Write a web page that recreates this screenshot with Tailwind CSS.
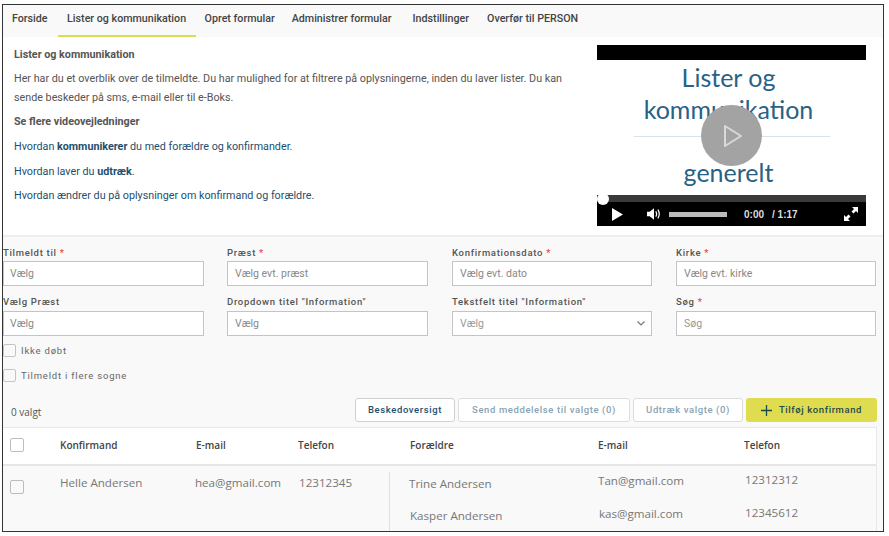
<!DOCTYPE html>
<html lang="da">
<head>
  <meta charset="UTF-8" />
  <title>Lister og kommunikation</title>
  <script src="https://cdn.jsdelivr.net/npm/@tailwindcss/browser@4"></script>
</head>
<body class="bg-white w-[889px] h-[536px] overflow-hidden font-['Roboto',sans-serif]">

  <div class="ml-[2px] mt-[4px] w-[882px] h-[528px] border border-[#333] bg-[#f9f9f9] overflow-hidden flex flex-col">

    <!-- Tabs -->
    <nav class="h-[32px] shrink-0 flex text-[10.7px] font-medium text-[#444] whitespace-nowrap">
      <a class="ml-[9px] pt-[6px]">Forside</a>
      <a class="ml-[10px] w-[138px] h-[32px] pt-[6px] text-center border-b-2 border-[#dcdc50]">Lister og kommunikation</a>
      <a class="ml-[9px] pt-[6px]">Opret formular</a>
      <a class="ml-[17px] pt-[6px]">Administrer formular</a>
      <a class="ml-[21px] pt-[6px]">Indstillinger</a>
      <a class="ml-[18px] pt-[6px]">Overfør til PERSON</a>
    </nav>

    <!-- Intro + video -->
    <section class="h-[200px] shrink-0 bg-white border-b-2 border-[#eeeeee] flex justify-between pl-[11px] pr-[17px]">
      <div class="w-[560px] pt-[11px] text-[10.75px] text-[#555]">
        <p class="font-bold leading-[14px]">Lister og kommunikation</p>
        <p class="mt-[7px] leading-[19px]">Her har du et overblik over de tilmeldte. Du har mulighed for at filtrere på oplysningerne, inden du laver lister. Du kan sende beskeder på sms, e-mail eller til e-Boks.</p>
        <p class="mt-[8px] font-bold leading-[14px]">Se flere videovejledninger</p>
        <p class="mt-[11px] leading-[14px] text-[#1d4f6e]">Hvordan <b>kommunikerer</b> du med forældre og konfirmander.</p>
        <p class="mt-[11px] leading-[14px] text-[#1d4f6e]">Hvordan laver du <b>udtræk</b>.</p>
        <p class="mt-[10px] leading-[14px] text-[#1d4f6e]">Hvordan ændrer du på oplysninger om konfirmand og forældre.</p>
      </div>

      <div class="relative w-[269px] h-[181px] mt-[8px] flex flex-col">
        <div class="h-[15px] bg-black"></div>
        <div class="h-[135px] bg-white pr-[6px] flex flex-col items-center text-[#2a6285] font-['Lato',sans-serif] text-[25px] leading-[33px]">
          <span class="mt-[1px]">Lister og</span>
          <span class="mt-[-1px]">kommunikation</span>
          <div class="ml-[6px] w-[196px] h-px bg-[#d8e2ea] mt-[10px]"></div>
          <span class="mt-[19px]">generelt</span>
        </div>
        <div class="h-[7px] bg-[#3a3a3a]"></div>
        <div class="h-[24px] bg-black flex items-center text-white text-[10px] font-['Liberation_Sans',sans-serif] font-bold">
          <svg class="ml-[15px] w-[11px] h-[13px]" viewBox="0 0 11 13"><path d="M0 0 L11 6.5 L0 13 Z" fill="#fff"/></svg>
          <svg class="ml-[24px] w-[14px] h-[14px]" viewBox="0 0 16 14"><path d="M0 4.5 H3 L8 0.5 V13.5 L3 9.5 H0 Z" fill="#fff"/><path d="M10 4 Q12 7 10 10 M12.5 2 Q15.5 7 12.5 12" stroke="#fff" stroke-width="1.4" fill="none"/></svg>
          <div class="ml-[8px] w-[58px] h-[5px] bg-[#bbb]"></div>
          <span class="ml-[17px] text-[#ddd]">0:00</span>
          <span class="ml-[8px] text-[#ddd]">/ 1:17</span>
          <svg class="ml-auto mr-[8px] w-[14px] h-[14px]" viewBox="0 0 14 14"><path d="M8 0 H14 V6 L12 4 L9.5 6.5 L7.5 4.5 L10 2 Z M6 14 H0 V8 L2 10 L4.5 7.5 L6.5 9.5 L4 12 Z" fill="#fff"/></svg>
        </div>
        <!-- over the picture -->
        <div class="absolute left-[104px] top-[60px] w-[61px] h-[61px] rounded-full bg-[#a3a3a3] flex items-center justify-center">
          <svg class="w-[20px] h-[24px] ml-[3px]" viewBox="0 0 20 24"><path d="M2 2 L18 12 L2 22 Z" fill="none" stroke="#d9d9d9" stroke-width="2" stroke-linejoin="round"/></svg>
        </div>
        <div class="absolute left-0 top-[148px] w-[12px] h-[12px] rounded-full bg-white"></div>
      </div>
    </section>

    <!-- Filters -->
    <section class="h-[190px] shrink-0 pr-[6px] text-[9.5px] font-medium tracking-[0.7px] text-[#555]">
      <div class="grid grid-cols-[201px_201px_201px_201px] gap-x-[23px] pt-[9px]">
        <div>
          <label class="block h-[15px] leading-[13px]">Tilmeldt til <span class="text-[#ee4444]">*</span></label>
          <div class="h-[25px] bg-white border border-[#c4c4c4] pl-[6px] text-[10.5px] font-normal tracking-normal text-[#888] leading-[23px]">Vælg</div>
        </div>
        <div>
          <label class="block h-[15px] leading-[13px]">Præst <span class="text-[#ee4444]">*</span></label>
          <div class="h-[25px] bg-white border border-[#c4c4c4] pl-[7px] text-[10.5px] font-normal tracking-normal text-[#888] leading-[23px]">Vælg evt. præst</div>
        </div>
        <div class="ml-px">
          <label class="block h-[15px] leading-[13px]">Konfirmationsdato <span class="text-[#ee4444]">*</span></label>
          <div class="h-[25px] bg-white border border-[#c4c4c4] pl-[7px] text-[10.5px] font-normal tracking-normal text-[#888] leading-[23px]">Vælg evt. dato</div>
        </div>
        <div class="ml-px">
          <label class="block h-[15px] leading-[13px]">Kirke <span class="text-[#ee4444]">*</span></label>
          <div class="h-[25px] bg-white border border-[#c4c4c4] pl-[7px] text-[10.5px] font-normal tracking-normal text-[#888] leading-[23px]">Vælg evt. kirke</div>
        </div>
      </div>
      <div class="grid grid-cols-[201px_201px_201px_201px] gap-x-[23px] mt-[10px]">
        <div>
          <label class="block h-[15px] leading-[11px]">Vælg Præst</label>
          <div class="h-[25px] bg-white border border-[#c4c4c4] pl-[6px] text-[10.5px] font-normal tracking-normal text-[#888] leading-[23px]">Vælg</div>
        </div>
        <div>
          <label class="block h-[15px] leading-[11px]">Dropdown titel "Information"</label>
          <div class="h-[25px] bg-white border border-[#c4c4c4] pl-[7px] text-[10.5px] font-normal tracking-normal text-[#888] leading-[23px]">Vælg</div>
        </div>
        <div class="ml-px">
          <label class="block h-[15px] leading-[11px]">Tekstfelt titel "Information"</label>
          <div class="h-[25px] bg-white border border-[#c4c4c4] pl-[7px] pr-[6px] text-[10.5px] font-normal tracking-normal text-[#999] leading-[23px] flex justify-between items-center">
            <span>Vælg</span>
            <svg class="w-[8px] h-[5px]" viewBox="0 0 8 5"><path d="M0.5 0.5 L4 4 L7.5 0.5" fill="none" stroke="#777" stroke-width="1.2"/></svg>
          </div>
        </div>
        <div class="ml-px">
          <label class="block h-[15px] leading-[11px]">Søg <span class="text-[#ee4444]">*</span></label>
          <div class="h-[25px] bg-white border border-[#c4c4c4] pl-[7px] text-[10.5px] font-normal tracking-normal text-[#999] leading-[23px]">Søg</div>
        </div>
      </div>
      <div class="mt-[8px] flex items-center gap-[5px] h-[13px] font-normal tracking-[0.8px] text-[#666]">
        <span class="w-[13px] h-[13px] bg-[#f9f9f9] border border-[#c4c4c4] rounded-[2px]"></span><span class="mt-[2px]">Ikke døbt</span>
      </div>
      <div class="mt-[12px] flex items-center gap-[5px] h-[13px] font-normal tracking-[0.8px] text-[#666]">
        <span class="w-[13px] h-[13px] bg-[#f9f9f9] border border-[#c4c4c4] rounded-[2px]"></span><span class="mt-[2px]">Tilmeldt i flere sogne</span>
      </div>

      <!-- Toolbar -->
      <div class="mt-[16px] h-[24px] flex items-center justify-end gap-[3px] text-[9.5px] tracking-[0.6px]">
        <span class="mr-auto ml-[8px] pt-[5px] font-['Open_Sans',sans-serif] text-[10px] font-normal tracking-normal text-[#555]">0 valgt</span>
        <button class="w-[100px] h-[24px] bg-white border border-[#d0d0d0] rounded-[3px] text-[#1d4f6e]">Beskedoversigt</button>
        <button class="w-[172px] h-[24px] bg-white border border-[#dddddd] rounded-[3px] text-[#8aa3b3]">Send meddelelse til valgte (0)</button>
        <button class="w-[110px] h-[24px] bg-white border border-[#dddddd] rounded-[3px] text-[#8aa3b3]">Udtræk valgte (0)</button>
        <button class="w-[131px] h-[24px] bg-[#dfdc50] rounded-[3px] text-[#1f4a4a] flex items-center justify-center gap-[7px]">
          <svg class="w-[11px] h-[11px]" viewBox="0 0 11 11"><path d="M5.5 0 V11 M0 5.5 H11" stroke="#1f4a4a" stroke-width="1.3"/></svg>
          Tilføj konfirmand
        </button>
      </div>
    </section>

    <!-- Table -->
    <section class="mr-[6px] border-t border-r border-[#e8e8e8] font-['Open_Sans',sans-serif]">
      <div class="h-[38px] pb-[2px] bg-white border-b-2 border-[#e6e6e6] grid grid-cols-[57px_136px_102px_112px_188px_146px_1fr] items-center text-[10px] font-semibold text-[#444]">
        <span class="ml-[7px] w-[14px] h-[14px] border border-[#bdbdbd] rounded-[2px]"></span>
        <span>Konfirmand</span>
        <span>E-mail</span>
        <span>Telefon</span>
        <span>Forældre</span>
        <span>E-mail</span>
        <span>Telefon</span>
      </div>
      <div class="relative h-[70px] grid grid-cols-[57px_136px_102px_112px_188px_146px_1fr] text-[11.6px] text-[#777]">
        <span class="ml-[7px] mt-[14px] w-[14px] h-[14px] border border-[#bdbdbd] rounded-[2px]"></span>
        <span class="mt-[8px]">Helle Andersen</span>
        <span class="mt-[8px] -ml-px">hea@gmail.com</span>
        <span class="mt-[8px] ml-px">12312345</span>
        <div class="-ml-px mt-[9px] flex flex-col gap-[15px]"><span>Trine Andersen</span><span class="ml-px">Kasper Andersen</span></div>
        <div class="mt-[6px] flex flex-col gap-[16px]"><span>Tan@gmail.com</span><span class="ml-px">kas@gmail.com</span></div>
        <div class="ml-px mt-[5px] flex flex-col gap-[16px]"><span>12312312</span><span>12345612</span></div>
        <!-- divider between child and parents -->
        <div class="absolute left-[386px] top-[6px] bottom-0 w-px bg-[#e0e0e0]"></div>
      </div>
    </section>
  </div>

</body>
</html>
